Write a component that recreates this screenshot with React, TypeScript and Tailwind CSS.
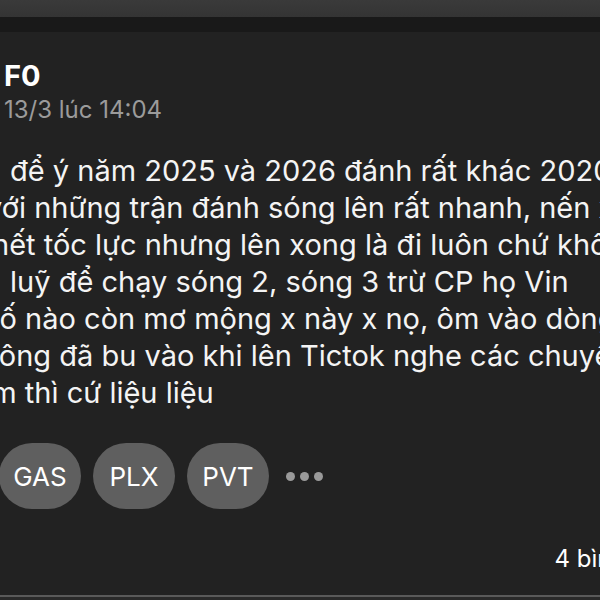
const lines: { text: string; offset: string }[] = [
  { text: 'để ý năm 2025 và 2026 đánh rất khác 2020 khi', offset: 'ml-[10px]' },
  { text: 'với những trận đánh sóng lên rất nhanh, nến xanh', offset: 'ml-[-14px]' },
  { text: 'hết tốc lực nhưng lên xong là đi luôn chứ không', offset: 'ml-[-8px]' },
  { text: 'luỹ để chạy sóng 2, sóng 3 trừ CP họ Vin', offset: 'ml-[10px]' },
  { text: 'cố nào còn mơ mộng x này x nọ, ôm vào dòng', offset: 'ml-[-17px]' },
  { text: 'đông đã bu vào khi lên Tictok nghe các chuyên gia', offset: 'ml-[-19px]' },
  { text: 'làm thì cứ liệu liệu', offset: 'ml-[-32px]' },
];

const tickers = ['GAS', 'PLX', 'PVT'];

export default function App() {
  return (
    <div className="w-[600px] h-[600px] overflow-hidden flex flex-col bg-[#222222] text-[#f4f4f4] font-['Inter','Noto_Sans',sans-serif]">
      {/* top bars */}
      <div className="h-[17px] shrink-0 bg-gradient-to-b from-[#3a3a3a] to-[#343434]" />
      <div className="h-[15px] shrink-0 bg-[#191919]" />

      <div className="flex-1 flex flex-col overflow-hidden">
        {/* header */}
        <div className="pl-[4px] pt-[26px]">
          <div className="text-[29px] font-bold leading-[36px] text-white">F0</div>
          <div className="text-[24px] leading-[30px] text-[#9b9b9b] mt-[1px]">13/3 lúc 14:04</div>
        </div>

        {/* post body */}
        <div className="mt-[27px] overflow-hidden">
          {lines.map((l, i) => (
            <div key={i} className={`whitespace-nowrap text-[29px] leading-[37px] ${l.offset}`}>
              {l.text}
            </div>
          ))}
        </div>

        {/* tickers */}
        <div className="flex items-center gap-[12px] ml-[-1px] mt-[32px]">
          {tickers.map((t) => (
            <div
              key={t}
              className="w-[82px] h-[66px] rounded-full bg-[#5f5f5f] flex items-center justify-center text-[26px] text-white"
            >
              {t}
            </div>
          ))}
          <div className="flex gap-[5px] ml-[5px]">
            <span className="w-[9px] h-[9px] rounded-full bg-[#9a9a9a]" />
            <span className="w-[9px] h-[9px] rounded-full bg-[#9a9a9a]" />
            <span className="w-[9px] h-[9px] rounded-full bg-[#9a9a9a]" />
          </div>
        </div>

        {/* footer */}
        <div className="flex-1 flex items-start justify-end mt-[35px]">
          <div className="whitespace-nowrap text-[24px] leading-[30px] text-white mr-[-80px]">4 bình luận</div>
        </div>
      </div>

      <div className="h-[2px] shrink-0 bg-[#5a5a5a]" />
      <div className="h-[3px] shrink-0 bg-[#2a2a2a]" />
    </div>
  );
}
